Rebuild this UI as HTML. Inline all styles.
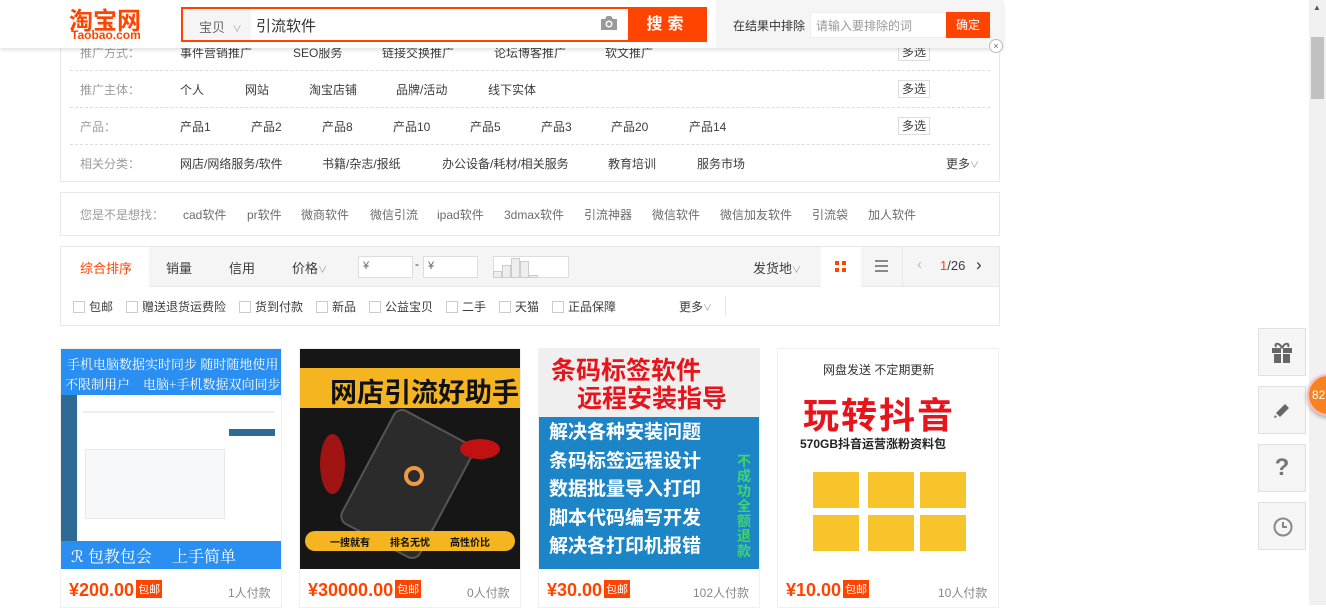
<!DOCTYPE html>
<html><head><meta charset="utf-8"><style>
*{margin:0;padding:0;box-sizing:border-box}
body{width:1326px;height:605px;overflow:hidden;background:#fff;font-family:"Liberation Sans","Noto Sans CJK SC",sans-serif;font-size:12px;color:#3c3c3c;position:relative}
.a{position:absolute}
.t{position:absolute;white-space:nowrap}
.dash{position:absolute;left:70px;width:920px;border-top:1px dashed #ddd}
.ms{position:absolute;left:898px;width:32px;height:18px;border:1px solid #ddd;font-size:12px;text-align:center;line-height:16px;color:#3c3c3c}
.lbl{color:#9c9c9c}
.cb{display:inline-block;width:12px;height:12px;border:1px solid #ccc;vertical-align:-2px;margin-right:4px;background:#fff}
.sb{position:absolute;left:1258px;width:48px;height:48px;background:#f5f5f5;border:1px solid #e0e0e0}
.price{position:absolute;top:580px;color:#ff4400;font-size:18px;font-weight:bold}
.by{display:inline-block;background:#ff4400;color:#fff;font-size:11px;font-weight:normal;padding:1px 2px;vertical-align:3px;margin-left:2px}
.pay{position:absolute;top:584px;color:#888;font-size:12px}
</style></head><body>

<!-- filter panel -->
<div class="a" style="left:60px;top:30px;width:940px;height:152px;border:1px solid #e8e8e8;border-top:none"></div>
<div class="t lbl" style="left:80px;top:44px">推广方式：</div>
<div class="t" style="left:180px;top:44px">事件营销推广</div><div class="t" style="left:293px;top:44px">SEO服务</div><div class="t" style="left:382px;top:44px">链接交换推广</div><div class="t" style="left:494px;top:44px">论坛博客推广</div><div class="t" style="left:605px;top:44px">软文推广</div>
<div class="ms" style="top:43px">多选</div>
<div class="dash" style="top:70px"></div>
<div class="t lbl" style="left:80px;top:81px">推广主体：</div>
<div class="t" style="left:180px;top:81px">个人</div><div class="t" style="left:245px;top:81px">网站</div><div class="t" style="left:309px;top:81px">淘宝店铺</div><div class="t" style="left:396px;top:81px">品牌/活动</div><div class="t" style="left:488px;top:81px">线下实体</div>
<div class="ms" style="top:80px">多选</div>
<div class="dash" style="top:107px"></div>
<div class="t lbl" style="left:80px;top:118px">产品：</div>
<div class="t" style="left:180px;top:118px">产品1</div><div class="t" style="left:251px;top:118px">产品2</div><div class="t" style="left:322px;top:118px">产品8</div><div class="t" style="left:393px;top:118px">产品10</div><div class="t" style="left:470px;top:118px">产品5</div><div class="t" style="left:541px;top:118px">产品3</div><div class="t" style="left:611px;top:118px">产品20</div><div class="t" style="left:689px;top:118px">产品14</div>
<div class="ms" style="top:117px">多选</div>
<div class="dash" style="top:144px"></div>
<div class="t lbl" style="left:80px;top:155px">相关分类：</div>
<div class="t" style="left:180px;top:155px">网店/网络服务/软件</div><div class="t" style="left:322px;top:155px">书籍/杂志/报纸</div><div class="t" style="left:442px;top:155px">办公设备/耗材/相关服务</div><div class="t" style="left:608px;top:155px">教育培训</div><div class="t" style="left:697px;top:155px">服务市场</div>
<div class="t" style="left:946px;top:155px">更多<span style="font-size:9px;color:#999">∨</span></div>

<!-- suggestion -->
<div class="a" style="left:60px;top:192px;width:940px;height:44px;border:1px solid #e8e8e8"></div>
<div class="t lbl" style="left:80px;top:206px">您是不是想找：</div>
<div class="t" style="left:183px;top:206px;color:#6c6c6c">cad软件</div>
<div class="t" style="left:247px;top:206px;color:#6c6c6c">pr软件</div>
<div class="t" style="left:301px;top:206px;color:#6c6c6c">微商软件</div>
<div class="t" style="left:370px;top:206px;color:#6c6c6c">微信引流</div>
<div class="t" style="left:437px;top:206px;color:#6c6c6c">ipad软件</div>
<div class="t" style="left:504px;top:206px;color:#6c6c6c">3dmax软件</div>
<div class="t" style="left:584px;top:206px;color:#6c6c6c">引流神器</div>
<div class="t" style="left:652px;top:206px;color:#6c6c6c">微信软件</div>
<div class="t" style="left:720px;top:206px;color:#6c6c6c">微信加友软件</div>
<div class="t" style="left:812px;top:206px;color:#6c6c6c">引流袋</div>
<div class="t" style="left:868px;top:206px;color:#6c6c6c">加人软件</div>

<!-- sort bar -->
<div class="a" style="left:60px;top:246px;width:940px;height:80px;border:1px solid #e8e8e8"></div>
<div class="a" style="left:61px;top:247px;width:938px;height:40px;background:#f5f5f5;border-bottom:1px solid #e8e8e8"></div>
<div class="a" style="left:61px;top:247px;width:88px;height:40px;background:#fff"></div>
<div class="t" style="left:80px;top:258px;color:#f40;font-size:13px">综合排序</div>
<div class="t" style="left:166px;top:258px;font-size:13px">销量</div>
<div class="t" style="left:229px;top:258px;font-size:13px">信用</div>
<div class="t" style="left:292px;top:258px;font-size:13px">价格<span style="font-size:9px;color:#999">∨</span></div>
<div class="a" style="left:358px;top:256px;width:55px;height:22px;background:#fff;border:1px solid #ddd;font-size:11px;padding:3px 4px;color:#666">¥</div>
<div class="t" style="left:415px;top:257px">-</div>
<div class="a" style="left:423px;top:256px;width:55px;height:22px;background:#fff;border:1px solid #ddd;font-size:11px;padding:3px 4px;color:#666">¥</div>
<div class="a" style="left:493px;top:256px;width:76px;height:22px;background:#fff;border:1px solid #ddd"></div>
<div class="a" style="left:493px;top:271px;width:9px;height:7px;background:#eee;border:1px solid #ccc"></div>
<div class="a" style="left:502px;top:265px;width:9px;height:13px;background:#eee;border:1px solid #ccc"></div>
<div class="a" style="left:511px;top:258px;width:9px;height:20px;background:#eee;border:1px solid #ccc"></div>
<div class="a" style="left:520px;top:261px;width:9px;height:17px;background:#eee;border:1px solid #ccc"></div>
<div class="a" style="left:529px;top:275px;width:9px;height:3px;background:#eee;border:1px solid #ccc"></div>
<div class="t" style="left:753px;top:258px;font-size:13px">发货地<span style="font-size:9px;color:#999">∨</span></div>
<div class="a" style="left:821px;top:247px;width:40px;height:40px;background:#fff"></div>
<div class="a" style="left:835px;top:261px;width:4px;height:4px;background:#f40;box-shadow:7px 0 #f40,0 7px #f40,7px 7px #f40"></div>
<div class="a" style="left:875px;top:260px;width:13px;height:2px;background:#888;box-shadow:0 5px #888,0 10px #888"></div>
<div class="a" style="left:902px;top:247px;width:1px;height:40px;background:#e8e8e8"></div>
<div class="t" style="left:917px;top:256px;color:#bbb;font-size:15px">‹</div>
<div class="t" style="left:940px;top:258px;font-size:13px"><span style="color:#f40">1</span>/26</div>
<div class="t" style="left:976px;top:255px;font-size:17px;color:#333">›</div>
<div class="t" style="left:73px;top:298px"><span class="cb"></span>包邮</div>
<div class="t" style="left:126px;top:298px"><span class="cb"></span>赠送退货运费险</div>
<div class="t" style="left:239px;top:298px"><span class="cb"></span>货到付款</div>
<div class="t" style="left:316px;top:298px"><span class="cb"></span>新品</div>
<div class="t" style="left:369px;top:298px"><span class="cb"></span>公益宝贝</div>
<div class="t" style="left:446px;top:298px"><span class="cb"></span>二手</div>
<div class="t" style="left:499px;top:298px"><span class="cb"></span>天猫</div>
<div class="t" style="left:552px;top:298px"><span class="cb"></span>正品保障</div>
<div class="t" style="left:679px;top:298px">更多<span style="font-size:9px;color:#999">∨</span></div>
<div class="a" style="left:725px;top:296px;width:1px;height:20px;background:#e8e8e8"></div>

<!-- products -->
<div class="a" style="left:60px;top:348px;width:222px;height:260px;border:1px solid #f0f0f0"></div>
<div class="a" style="left:299px;top:348px;width:222px;height:260px;border:1px solid #f0f0f0"></div>
<div class="a" style="left:538px;top:348px;width:222px;height:260px;border:1px solid #f0f0f0"></div>
<div class="a" style="left:777px;top:348px;width:222px;height:260px;border:1px solid #f0f0f0"></div>

<!-- img1 -->
<div class="a" style="left:61px;top:349px;width:220px;height:220px;background:#2a8ff0;overflow:hidden">
 <div class="t" style="left:6px;top:5px;color:#fff;font-size:13px;font-family:'Noto Serif CJK SC',serif">手机电脑数据实时同步 随时随地使用</div>
 <div class="t" style="left:4px;top:25px;color:#fff;font-size:13px;font-family:'Noto Serif CJK SC',serif">不限制用户　电脑+手机数据双向同步</div>
 <div class="a" style="left:0;top:46px;width:220px;height:146px;background:#fff"></div>
 <div class="a" style="left:0;top:46px;width:16px;height:146px;background:#2d6a95"></div>
 <div class="a" style="left:22px;top:62px;width:192px;height:2px;background:#eee"></div>
 <div class="a" style="left:168px;top:80px;width:46px;height:7px;background:#2d6a95"></div>
 <div class="a" style="left:24px;top:100px;width:140px;height:70px;background:#f6f8fa;border:1px solid #e8e8e8"></div>
 <div class="t" style="left:10px;top:195px;color:#fff;font-size:16px;font-family:'Noto Serif CJK SC',serif">ℛ 包教包会　 上手简单</div>
</div>
<!-- img2 -->
<div class="a" style="left:300px;top:349px;width:220px;height:220px;background:#161616;overflow:hidden">
 <div class="a" style="left:0;top:19px;width:220px;height:40px;background:#f5b521"></div>
 <div class="t" style="left:30px;top:22px;color:#111;font-size:27px;font-weight:bold">网店引流好助手</div>
 <div class="a" style="left:62px;top:70px;width:90px;height:130px;background:#2b2b2b;border:2px solid #555;border-radius:10px;transform:rotate(28deg)"></div>
 <div class="a" style="left:20px;top:85px;width:25px;height:60px;background:#a01414;border-radius:50%"></div>
 <div class="a" style="left:160px;top:90px;width:40px;height:20px;background:#c01212;border-radius:50%"></div>
 <div class="a" style="left:104px;top:117px;width:20px;height:20px;border:4px solid #e94;border-radius:50%"></div>
 <div class="a" style="left:5px;top:182px;width:210px;height:20px;background:#f5b521;border-radius:10px"></div>
 <div class="t" style="left:30px;top:185px;color:#111;font-size:10px;font-weight:bold">一搜就有　　排名无忧　　高性价比</div>
</div>
<!-- img3 -->
<div class="a" style="left:539px;top:349px;width:220px;height:220px;background:#efefef;overflow:hidden">
 <div class="t" style="left:12px;top:2px;color:#e8141b;font-size:25px;font-weight:bold">条码标签软件</div>
 <div class="t" style="left:38px;top:30px;color:#e8141b;font-size:25px;font-weight:bold">远程安装指导</div>
 <div class="a" style="left:0;top:68px;width:220px;height:152px;background:#1c85c8"></div>
 <div class="t" style="left:10px;top:70px;color:#fff;font-size:19px;line-height:28.5px;font-weight:bold">解决各种安装问题<br>条码标签远程设计<br>数据批量导入打印<br>脚本代码编写开发<br>解决各打印机报错</div>
 <div class="a" style="left:196px;top:105px;width:18px;height:105px;color:#3fd46b;font-size:14px;line-height:15px;font-weight:bold;text-align:center">不成功全额退款</div>
</div>
<!-- img4 -->
<div class="a" style="left:778px;top:349px;width:220px;height:220px;background:#fff;overflow:hidden">
 <div class="t" style="left:45px;top:12px;color:#333;font-size:12px">网盘发送 不定期更新</div>
 <div class="t" style="left:25px;top:38px;color:#e8141b;font-size:36px;font-weight:bold;letter-spacing:2px">玩转抖音</div>
 <div class="t" style="left:22px;top:86px;color:#222;font-size:12px;font-weight:bold">570GB抖音运营涨粉资料包</div>
 <div class="a" style="left:35px;top:123px;width:46px;height:36px;background:#f7c42b"></div>
 <div class="a" style="left:90px;top:123px;width:46px;height:36px;background:#f7c42b"></div>
 <div class="a" style="left:142px;top:123px;width:46px;height:36px;background:#f7c42b"></div>
 <div class="a" style="left:35px;top:166px;width:46px;height:36px;background:#f7c42b"></div>
 <div class="a" style="left:90px;top:166px;width:46px;height:36px;background:#f7c42b"></div>
 <div class="a" style="left:142px;top:166px;width:46px;height:36px;background:#f7c42b"></div>
</div>

<div class="price" style="left:69px">¥200.00<span class="by">包邮</span></div><div class="pay" style="left:228px">1人付款</div>
<div class="price" style="left:308px">¥30000.00<span class="by">包邮</span></div><div class="pay" style="left:467px">0人付款</div>
<div class="price" style="left:547px">¥30.00<span class="by">包邮</span></div><div class="pay" style="left:693px">102人付款</div>
<div class="price" style="left:786px">¥10.00<span class="by">包邮</span></div><div class="pay" style="left:938px">10人付款</div>

<!-- header -->
<div class="a" style="left:0;top:0;width:1003px;height:48px;background:#fff;box-shadow:0 2px 4px rgba(0,0,0,.12)"></div>
<div class="t" style="left:69px;top:1px;color:#f40;font-size:24px;font-weight:bold;letter-spacing:0">淘宝网</div>
<div class="t" style="left:71px;top:28px;color:#f40;font-size:12px;font-weight:bold">Taobao.com</div>
<div class="a" style="left:181px;top:7px;width:526px;height:35px;border:2px solid #f40;background:#fff"></div>
<div class="a" style="left:183px;top:9px;width:68px;height:31px;background:#f5f5f5"></div>
<div class="t" style="left:199px;top:17px;color:#666;font-size:13px">宝贝 <span style="font-size:9px;color:#999;margin-left:4px">∨</span></div>
<div class="t" style="left:256px;top:15px;font-size:15px;color:#333">引流软件</div>
<svg class="a" style="left:600px;top:15px" width="18" height="16" viewBox="0 0 18 16"><path d="M1 4h4l2-3h4l2 3h4v11H1z" fill="#999"/><circle cx="9" cy="9" r="3.5" fill="#fff"/><circle cx="9" cy="9" r="2" fill="#999"/></svg>
<div class="a" style="left:628px;top:7px;width:79px;height:35px;background:#f40;color:#fff;font-size:16px;font-weight:bold;text-align:center;line-height:35px;letter-spacing:5px">搜索</div>
<div class="a" style="left:716px;top:0;width:287px;height:48px;background:#f5f5f5"></div>
<div class="t" style="left:733px;top:17px;color:#333">在结果中排除</div>
<div class="a" style="left:810px;top:12px;width:137px;height:26px;background:#fff;border:1px solid #eee"></div>
<div class="t" style="left:816px;top:17px;color:#999">请输入要排除的词</div>
<div class="a" style="left:946px;top:12px;width:44px;height:26px;background:#f40;color:#fff;text-align:center;line-height:26px">确定</div>
<div class="a" style="left:989px;top:39px;width:14px;height:14px;border:1px solid #bbb;border-radius:50%;background:#fff;font-size:9px;line-height:12px;text-align:center;color:#666">×</div>

<!-- sidebar -->
<div class="sb" style="top:328px"><svg style="margin:11px" width="24" height="24" viewBox="0 0 24 24"><rect x="2" y="8" width="20" height="5" fill="#666"/><rect x="4" y="14" width="16" height="9" fill="#666"/><rect x="11" y="8" width="2" height="15" fill="#f5f5f5"/><path d="M12 8C9 2 4 3 6 7M12 8c3-6 8-5 6-1" stroke="#666" stroke-width="2" fill="none"/></svg></div>
<div class="sb" style="top:386px"><svg style="margin:13px" width="20" height="20" viewBox="0 0 20 20"><path d="M4 13L13 4l4 4-9 9z" fill="#666"/><path d="M3 15l2 2-3 1z" fill="#666"/></svg></div>
<div class="sb" style="top:444px;font-size:24px;color:#777;text-align:center;line-height:46px;font-weight:bold">?</div>
<div class="sb" style="top:502px"><svg style="margin:13px" width="22" height="22" viewBox="0 0 22 22"><circle cx="11" cy="11" r="8.5" stroke="#888" stroke-width="2" fill="none"/><path d="M11 6v5h4" stroke="#888" stroke-width="2" fill="none"/></svg></div>

<!-- scrollbar -->
<div class="a" style="left:1309px;top:0;width:17px;height:605px;background:#f1f1f1"></div>
<div class="a" style="left:1311px;top:37px;width:13px;height:62px;background:#c1c1c1"></div>
<div class="t" style="left:1313px;top:3px;font-size:8px;color:#555">▲</div>

<div class="a" style="left:1307px;top:374px;width:42px;height:42px;border-radius:50%;background:#f7821f;border:2px solid #fbb;box-shadow:0 2px 4px rgba(0,0,0,.3)"></div>
<div class="t" style="left:1312px;top:388px;color:#fff;font-size:12px">82</div>
</body></html>
